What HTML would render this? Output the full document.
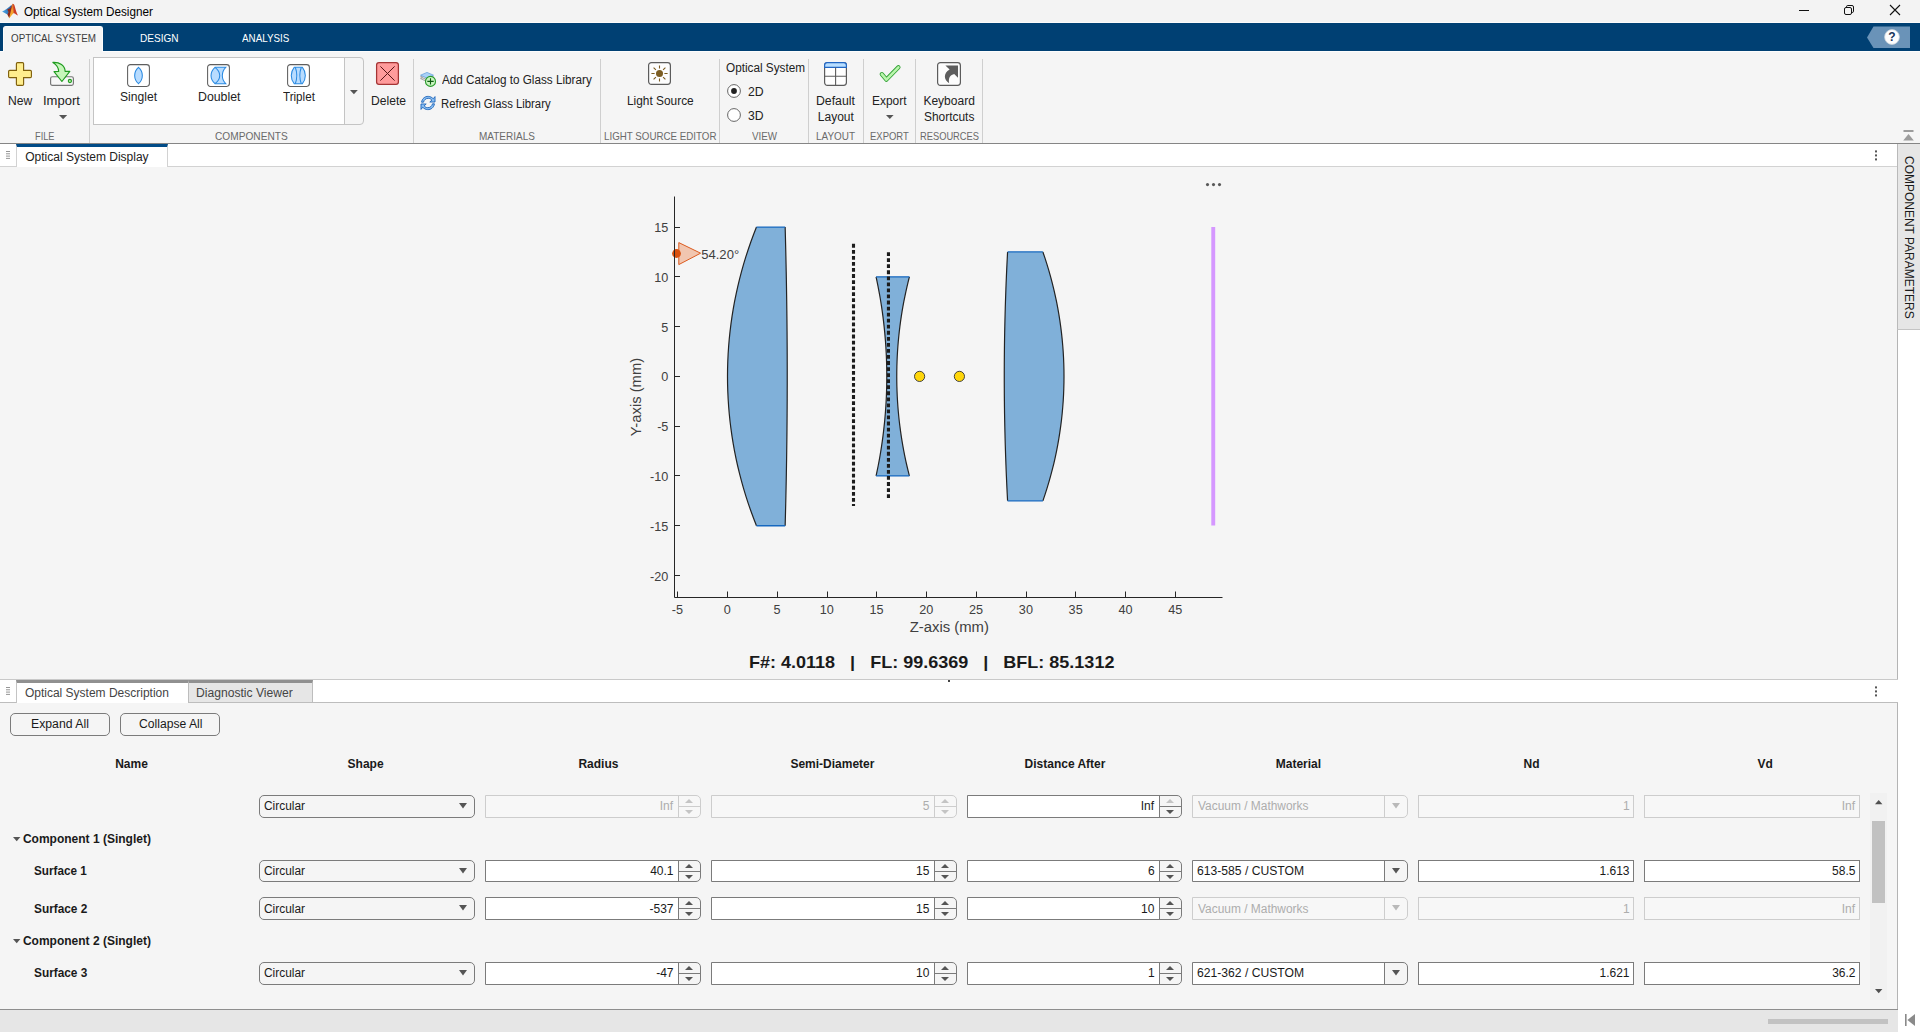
<!DOCTYPE html>
<html lang="en"><head><meta charset="utf-8"><title>Optical System Designer</title>
<style>
html,body{margin:0;padding:0;}
body{width:1920px;height:1032px;overflow:hidden;background:#f5f5f5;font-family:"Liberation Sans",sans-serif;position:relative;}
.t{position:absolute;white-space:pre;line-height:1;transform-origin:0 0;}
.b{position:absolute;box-sizing:border-box;}
svg{position:absolute;overflow:visible;}
.sep{position:absolute;top:59px;height:84px;width:1px;background:#cfcfcf;}
.dd{position:absolute;box-sizing:border-box;height:23px;border:1px solid #7b7b7b;border-radius:5px;background:#f5f5f5;}
.sp{position:absolute;box-sizing:border-box;height:23px;border:1px solid #7b7b7b;border-radius:0 5px 5px 0;background:#f5f5f5;}
.sp i{position:absolute;left:0;top:0;bottom:0;background:#fff;border-right:1px solid #7b7b7b;}
.sp b{position:absolute;right:0;top:10px;height:1px;background:#7b7b7b;width:22px;}
.sp.dis,.dd.dis,.ef.dis{border-color:#cdcdcd;background:#f7f7f7;}
.sp.dis i{background:#f7f7f7;border-color:#cdcdcd;}
.sp.dis b{background:#cdcdcd;}
.ef{position:absolute;box-sizing:border-box;height:23px;border:1px solid #7b7b7b;background:#fff;}
.md{position:absolute;box-sizing:border-box;height:23px;border:1px solid #7b7b7b;border-radius:0 5px 5px 0;background:#f5f5f5;}
.md i{position:absolute;left:0;top:0;bottom:0;background:#fff;border-right:1px solid #7b7b7b;}
.md.dis{border-color:#cdcdcd;background:#f7f7f7;}
.md.dis i{background:#f7f7f7;border-color:#cdcdcd;}
</style></head><body>

<div class="b" style="left:0;top:0;width:1920px;height:23px;background:#f3f3f3;border-bottom:1px solid #fbfbfb"></div>
<svg style="left:2px;top:3px" width="17" height="16" viewBox="0 0 17 16">
<defs><linearGradient id="lgb" x1="0" y1="0" x2="1" y2="0"><stop offset="0" stop-color="#49a6e6"/><stop offset="1" stop-color="#2a63a8"/></linearGradient>
<linearGradient id="lgo" x1="0" y1="0" x2="0" y2="1"><stop offset="0" stop-color="#d8601c"/><stop offset="0.45" stop-color="#f39a2e"/><stop offset="1" stop-color="#f7b52a"/></linearGradient></defs>
<path d="M0.1 8.6 C3.6 7 6.8 4.6 9.6 1.8 L8.8 7 L5.4 11.4 Z" fill="url(#lgb)"/>
<path d="M5.2 6.6 L8.4 5 C9.2 3.4 9.9 1.9 10.6 0.7 L10.2 8 L7.3 15.2 L5.3 11.4 L6.6 9 Z" fill="#8e2a1a"/>
<path d="M10.6 0.7 C11.2 0.5 11.6 1 11.9 1.8 L12.2 9.8 C10.8 10.4 9.6 12.6 7.4 15.3 L7.2 15 C8.5 10.4 9.2 5.4 10.6 0.7 Z" fill="url(#lgo)"/>
<path d="M11.3 0.9 C12.2 1 12.6 2.6 13 4.2 C13.8 7.4 14.8 10.4 16 12.4 C14.4 11.9 13.2 10.4 11.6 10.2 C11.4 7 11.3 4 11.3 0.9 Z" fill="#cc3b24"/>
</svg>
<span class="t" style="left:23.83px;top:5.80px;font-size:12px;color:#000;transform:scaleX(0.9756);">Optical System Designer</span>
<svg style="left:1790px;top:0" width="130" height="23" viewBox="0 0 130 23">
<path d="M9 10.5 H19" stroke="#111" stroke-width="1" fill="none"/>
<rect x="54.5" y="7.5" width="7" height="7" rx="1.5" fill="none" stroke="#111" stroke-width="1"/>
<path d="M56.5 7.5 V6.8 Q56.5 5.5 57.8 5.5 H62 Q63.5 5.5 63.5 7 V11.2 Q63.5 12.5 62.2 12.5 H61.5" fill="none" stroke="#111" stroke-width="1"/>
<path d="M100 5 L110 15 M110 5 L100 15" stroke="#111" stroke-width="1.1" fill="none"/>
</svg>
<div class="b" style="left:0;top:23px;width:1920px;height:28px;background:#004073"></div>
<div class="b" style="left:0;top:51px;width:1920px;height:1px;background:#fdfdfd"></div>
<div class="b" style="left:3px;top:26px;width:100px;height:26px;background:#f5f5f5;border:1px solid #fdfdfd;border-bottom:none;border-radius:3px 3px 0 0"></div>
<span class="t" style="left:10.91px;top:33.00px;font-size:11px;color:#3c3c3c;transform:scaleX(0.8941);">OPTICAL SYSTEM</span>
<span class="t" style="left:140.19px;top:33.00px;font-size:11px;color:#fff;transform:scaleX(0.9165);">DESIGN</span>
<span class="t" style="left:242.00px;top:33.00px;font-size:11px;color:#fff;transform:scaleX(0.8919);">ANALYSIS</span>
<svg style="left:1866px;top:26px" width="46" height="23" viewBox="0 0 46 23">
<path d="M1 11.5 L7.5 0.5 H44 V22 H7.5 Z" fill="#6a93b8"/>
<circle cx="26" cy="11" r="7.4" fill="#fdfdfd"/>
<circle cx="26" cy="11" r="7.4" fill="none" stroke="#c9d3dc" stroke-width="0.8"/>
<text x="26" y="15.2" font-family="Liberation Sans, sans-serif" font-weight="bold" font-size="12" text-anchor="middle" fill="#16335a">?</text>
</svg>
<div class="b" style="left:0;top:52px;width:1920px;height:92px;background:#f5f5f5;border-bottom:1px solid #858585"></div>
<div class="sep" style="left:89px"></div>
<div class="sep" style="left:413px"></div>
<div class="sep" style="left:600px"></div>
<div class="sep" style="left:719px"></div>
<div class="sep" style="left:808px"></div>
<div class="sep" style="left:863px"></div>
<div class="sep" style="left:915px"></div>
<div class="sep" style="left:982px"></div>
<svg style="left:8px;top:62px" width="24" height="24" viewBox="0 0 24 24">
<path d="M9.5 0.6 H14.5 Q15.6 0.6 15.6 1.7 V8.4 H22.3 Q23.4 8.4 23.4 9.5 V14.5 Q23.4 15.6 22.3 15.6 H15.6 V22.3 Q15.6 23.4 14.5 23.4 H9.5 Q8.4 23.4 8.4 22.3 V15.6 H1.7 Q0.6 15.6 0.6 14.5 V9.5 Q0.6 8.4 1.7 8.4 H8.4 V1.7 Q8.4 0.6 9.5 0.6 Z" fill="#ffee8e" stroke="#80600c" stroke-width="1.15"/>
</svg>
<span class="t" style="left:7.63px;top:95.00px;font-size:12px;color:#222;transform:scaleX(1.0104);">New</span>
<svg style="left:50px;top:62px" width="24" height="24" viewBox="0 0 24 24">
<rect x="0.6" y="14.7" width="22.8" height="8.7" rx="1.8" fill="#f7f7f7" stroke="#767676" stroke-width="1.15"/>
<path d="M2.9 0.4 C9.6 0 15 3.4 15.1 9.3 L19.8 9.3 L11.9 19.5 L4 9.6 L8.7 9.5 C8.6 5.4 6.6 2.6 2.9 0.4 Z" fill="#c6f6ba" stroke="#1f9b1f" stroke-width="1.15" stroke-linejoin="round"/>
<circle cx="19.9" cy="19" r="1.6" fill="#b4eea4" stroke="#1f9b1f" stroke-width="1.1"/>
</svg>
<span class="t" style="left:43.13px;top:95.00px;font-size:12px;color:#222;transform:scaleX(1.0858);">Import</span>
<svg style="left:59px;top:115px" width="9" height="5"><path d="M0 0 H8.2 L4.1 4.2 Z" fill="#555"/></svg>
<span class="t" style="left:34.86px;top:131.25px;font-size:11.5px;color:#6a6a6a;transform:scaleX(0.8040);">FILE</span>
<div class="b" style="left:93px;top:57px;width:271px;height:68px;background:#f5f5f5;border:1px solid #c4c4c4;border-radius:0 4px 4px 0"></div>
<div class="b" style="left:93px;top:57px;width:252px;height:68px;background:#fff;border:1px solid #c4c4c4"></div>
<svg style="left:350px;top:90px" width="8" height="4"><path d="M0 0 H7.8 L3.9 4.2 Z" fill="#555"/></svg>
<svg style="left:127px;top:64px" width="23" height="23" viewBox="0 0 23 23"><rect x="0.6" y="0.6" width="21.8" height="21.8" rx="2.8" fill="#fff" stroke="#5e5e5e" stroke-width="1.05"/><path d="M11.5 3.3 C6.4 7.6 6.4 15.4 11.5 19.7 C16.6 15.4 16.6 7.6 11.5 3.3 Z" fill="#b8dcff" stroke="#2a8ae2" stroke-width="1.05"/></svg>
<svg style="left:207px;top:64px" width="23" height="23" viewBox="0 0 23 23"><rect x="0.6" y="0.6" width="21.8" height="21.8" rx="2.8" fill="#fff" stroke="#5e5e5e" stroke-width="1.05"/><path d="M8 3.3 H18.7 C14.2 8 14.2 15 18.7 19.7 H8 C2.7 15 2.7 8 8 3.3 Z" fill="#b8dcff" stroke="#2a8ae2" stroke-width="1.05"/><path d="M8 3.3 C14.3 8 14.3 15 8 19.7" fill="none" stroke="#2a8ae2" stroke-width="1.05"/></svg>
<svg style="left:287px;top:64px" width="23" height="23" viewBox="0 0 23 23"><rect x="0.6" y="0.6" width="21.8" height="21.8" rx="2.8" fill="#fff" stroke="#5e5e5e" stroke-width="1.05"/><path d="M7.2 3.3 H15.4 C19.3 8 19.3 15 15.4 19.7 H7.2 C3.3 15 3.3 8 7.2 3.3 Z" fill="#b8dcff" stroke="#2a8ae2" stroke-width="1.05"/><path d="M8.3 3.3 C10 8 10 15 8.3 19.7 M14.3 3.3 C12.6 8 12.6 15 14.3 19.7" fill="none" stroke="#2a8ae2" stroke-width="1.05"/></svg>
<span class="t" style="left:120.09px;top:90.70px;font-size:12px;color:#222;transform:scaleX(1.0083);">Singlet</span>
<span class="t" style="left:197.61px;top:90.70px;font-size:12px;color:#222;transform:scaleX(1.0268);">Doublet</span>
<span class="t" style="left:282.97px;top:90.70px;font-size:12px;color:#222;transform:scaleX(0.9686);">Triplet</span>
<span class="t" style="left:215.09px;top:131.25px;font-size:11.5px;color:#6a6a6a;transform:scaleX(0.8819);">COMPONENTS</span>
<svg style="left:376px;top:62px" width="23" height="23" viewBox="0 0 23 23">
<rect x="0.6" y="0.6" width="21.8" height="21.8" rx="2.4" fill="#ff9b9b" stroke="#a43434" stroke-width="1.25"/>
<path d="M4.4 4.4 L18.6 18.6 M18.6 4.4 L4.4 18.6" stroke="#571616" stroke-width="1" fill="none"/>
</svg>
<span class="t" style="left:370.63px;top:95.00px;font-size:12px;color:#222;transform:scaleX(1.0085);">Delete</span>
<svg style="left:420px;top:72px" width="17" height="16" viewBox="0 0 17 16">
<path d="M0.5 6.6 L7 3.8 L13.5 6.6 L7 9.6 Z" fill="#e8e8e8" stroke="#8a8a8a" stroke-width="0.7"/>
<path d="M0.5 4.8 L7 2 L13.5 4.8 L7 7.8 Z" fill="#e8e8e8" stroke="#8a8a8a" stroke-width="0.7"/>
<path d="M0.5 3.2 L7 0.4 L13.5 3.2 L7 6.2 Z" fill="#a9d1f7" stroke="#5b9bd8" stroke-width="0.7"/>
<circle cx="10.5" cy="9.4" r="5" fill="#c9f5c0" stroke="#27992a" stroke-width="1.1"/>
<path d="M7.3 9.4 H13.7 M10.5 6.2 V12.6" stroke="#0d5c10" stroke-width="1.1"/>
</svg>
<span class="t" style="left:442.30px;top:73.80px;font-size:12px;color:#222;transform:scaleX(0.9761);">Add Catalog to Glass Library</span>
<svg style="left:420px;top:95px" width="16" height="16" viewBox="0 0 16 16">
<path d="M1.6 7.2 C2 3.6 5 1.2 8.4 1.4 C10.4 1.5 12 2.4 13.2 3.8 L15 1.6 V7 H9.8 L11.9 5.1 C10.9 3.9 9.6 3.3 8.2 3.3 C5.8 3.3 3.9 5 3.5 7.2 Z" fill="#8cc1f4" stroke="#1b62b8" stroke-width="0.9" stroke-linejoin="round"/>
<path d="M14.4 8.8 C14 12.4 11 14.8 7.6 14.6 C5.6 14.5 4 13.6 2.8 12.2 L1 14.4 V9 H6.2 L4.1 10.9 C5.1 12.1 6.4 12.7 7.8 12.7 C10.2 12.7 12.1 11 12.5 8.8 Z" fill="#8cc1f4" stroke="#1b62b8" stroke-width="0.9" stroke-linejoin="round"/>
</svg>
<span class="t" style="left:441.39px;top:97.60px;font-size:12px;color:#222;transform:scaleX(0.9446);">Refresh Glass Library</span>
<span class="t" style="left:479.00px;top:131.25px;font-size:11.5px;color:#6a6a6a;transform:scaleX(0.8680);">MATERIALS</span>
<svg style="left:648px;top:62px" width="23" height="23" viewBox="0 0 23 23">
<rect x="0.6" y="0.6" width="21.8" height="21.8" rx="2.8" fill="#fdfdfd" stroke="#5c5c5c" stroke-width="1.2"/>
<circle cx="11.5" cy="11.5" r="3.5" fill="#7c5d22"/>
<path d="M11.5 3.4 V6.6 M11.5 16.4 V19.6 M3.4 11.5 H6.6 M16.4 11.5 H19.6 M5.6 5.6 L7.9 7.9 M15.1 15.1 L17.4 17.4 M17.4 5.6 L15.1 7.9 M7.9 15.1 L5.6 17.4" stroke="#7c5d22" stroke-width="1.1" fill="none"/>
</svg>
<span class="t" style="left:626.85px;top:95.00px;font-size:12px;color:#222;transform:scaleX(0.9897);">Light Source</span>
<span class="t" style="left:603.92px;top:131.25px;font-size:11.5px;color:#6a6a6a;transform:scaleX(0.8490);">LIGHT SOURCE EDITOR</span>
<span class="t" style="left:726.13px;top:62.00px;font-size:12px;color:#222;transform:scaleX(0.9794);">Optical System</span>
<svg style="left:727px;top:84px" width="14" height="14" viewBox="0 0 14 14"><circle cx="7" cy="7" r="6.4" fill="#fff" stroke="#666" stroke-width="1"/><circle cx="7" cy="7" r="2.9" fill="#222"/></svg>
<svg style="left:727px;top:108px" width="14" height="14" viewBox="0 0 14 14"><circle cx="7" cy="7" r="6.4" fill="#fff" stroke="#666" stroke-width="1"/></svg>
<span class="t" style="left:747.79px;top:85.60px;font-size:12px;color:#222;transform:scaleX(1.0224);">2D</span>
<span class="t" style="left:747.91px;top:109.60px;font-size:12px;color:#222;transform:scaleX(1.0139);">3D</span>
<span class="t" style="left:751.50px;top:131.25px;font-size:11.5px;color:#6a6a6a;transform:scaleX(0.8525);">VIEW</span>
<svg style="left:824px;top:62px" width="23" height="24" viewBox="0 0 23 24">
<rect x="0.6" y="0.6" width="21.8" height="22.8" rx="2.8" fill="#fff" stroke="#5c5c5c" stroke-width="1.2"/>
<path d="M0.6 5.3 V3.2 Q0.6 0.6 3.2 0.6 H19.8 Q22.4 0.6 22.4 3.2 V5.3 Z" fill="#b8deff" stroke="#2267c4" stroke-width="1.2"/>
<path d="M0.6 14.3 H22.4 M11.6 5.6 V23.4" stroke="#5c5c5c" stroke-width="1.1" fill="none"/>
</svg>
<span class="t" style="left:816.22px;top:95.00px;font-size:12px;color:#222;transform:scaleX(1.0227);">Default</span>
<span class="t" style="left:817.84px;top:110.60px;font-size:12px;color:#222;">Layout</span>
<span class="t" style="left:816.21px;top:131.25px;font-size:11.5px;color:#6a6a6a;transform:scaleX(0.8628);">LAYOUT</span>
<svg style="left:878px;top:64px" width="24" height="19" viewBox="0 0 24 19">
<path d="M3.8 10.2 L8.4 15.6 L20.4 3.3" fill="none" stroke="#2fa032" stroke-width="4.3" stroke-linecap="round" stroke-linejoin="round"/><path d="M3.8 10.2 L8.4 15.6 L20.4 3.3" fill="none" stroke="#baf5ad" stroke-width="2.6" stroke-linecap="round" stroke-linejoin="round"/>
</svg>
<span class="t" style="left:871.65px;top:95.00px;font-size:12px;color:#222;transform:scaleX(0.9940);">Export</span>
<svg style="left:886px;top:115px" width="8" height="4"><path d="M0 0 H7.6 L3.8 4 Z" fill="#555"/></svg>
<span class="t" style="left:869.94px;top:131.25px;font-size:11.5px;color:#6a6a6a;transform:scaleX(0.8238);">EXPORT</span>
<svg style="left:937px;top:62px" width="24" height="24" viewBox="0 0 24 24">
<rect x="0.6" y="0.6" width="22.8" height="22.8" rx="2.8" fill="#fdfdfd" stroke="#5c5c5c" stroke-width="1.2"/>
<path d="M8.4 3.4 H21 V15.8 L17.2 12 C13.6 12.8 11 15.8 12.2 21.2 C6.8 18.4 6 11.4 12.6 7.6 Z" fill="#5e5e5e"/>
</svg>
<span class="t" style="left:923.44px;top:95.00px;font-size:12px;color:#222;">Keyboard</span>
<span class="t" style="left:924.00px;top:110.60px;font-size:12px;color:#222;transform:scaleX(0.9944);">Shortcuts</span>
<span class="t" style="left:919.56px;top:131.25px;font-size:11.5px;color:#6a6a6a;transform:scaleX(0.8094);">RESOURCES</span>
<svg style="left:1903px;top:130px" width="11" height="11"><rect x="0.5" y="0" width="10" height="2" fill="#9c9c9c"/><path d="M0.2 10.6 L5.5 4 L10.8 10.6 Z" fill="#9c9c9c"/></svg>
<div class="b" style="left:0;top:144px;width:1898px;height:23px;background:#fff;border-bottom:1px solid #d2d2d2"></div>
<div class="b" style="left:16px;top:144px;width:152px;height:23px;background:#fff;border-left:1px solid #d2d2d2;border-right:1px solid #d2d2d2;border-top:3px solid #004b87"></div>
<svg style="left:5.5px;top:151px" width="5" height="8"><path d="M0 0.5 H4 M0 2.8 H4 M0 5.1 H4 M0 7.4 H4" stroke="#8a8a8a" stroke-width="0.9"/></svg>
<span class="t" style="left:25.22px;top:150.70px;font-size:12px;color:#222;">Optical System Display</span>
<svg style="left:1874px;top:150px" width="4" height="11"><rect x="1" y="0.4" width="2" height="2" fill="#555"/><rect x="1" y="4.4" width="2" height="2" fill="#555"/><rect x="1" y="8.4" width="2" height="2" fill="#555"/></svg>
<div class="b" style="left:1897px;top:144px;width:23px;height:888px;background:#fff;border-left:1px solid #b4b4b4"></div>
<div class="b" style="left:1897px;top:144px;width:23px;height:186px;background:#e6e6e6;border-left:1px solid #b9b9b9;border-bottom:1px solid #c4c4c4"></div>
<span class="t" style="left:1904.6px;top:156.20px;font-size:12px;color:#1a1a1a;transform-origin:0 0;transform:rotate(90deg) translate(0,-10.00px) scaleX(0.9984);">COMPONENT PARAMETERS</span>
<svg style="left:0;top:0" width="1920" height="1032" viewBox="0 0 1920 1032" font-family="Liberation Sans, sans-serif">
<path d="M756.48 525.73 L753.56 518.27 L750.80 510.80 L748.22 503.33 L745.79 495.87 L743.53 488.40 L741.43 480.93 L739.48 473.47 L737.68 466.00 L736.04 458.53 L734.54 451.07 L733.20 443.60 L731.99 436.13 L730.94 428.67 L730.02 421.20 L729.25 413.73 L728.62 406.27 L728.13 398.80 L727.78 391.33 L727.57 383.87 L727.50 376.40 L727.57 368.93 L727.78 361.47 L728.13 354.00 L728.62 346.53 L729.25 339.07 L730.02 331.60 L730.94 324.13 L731.99 316.67 L733.20 309.20 L734.54 301.73 L736.04 294.27 L737.68 286.80 L739.48 279.33 L741.43 271.87 L743.53 264.40 L745.79 256.93 L748.22 249.47 L750.80 242.00 L753.56 234.53 L756.48 227.07 L785.15 227.07 L785.35 234.53 L785.54 242.00 L785.73 249.47 L785.90 256.93 L786.06 264.40 L786.21 271.87 L786.35 279.33 L786.48 286.80 L786.60 294.27 L786.71 301.73 L786.81 309.20 L786.90 316.67 L786.98 324.13 L787.05 331.60 L787.10 339.07 L787.15 346.53 L787.19 354.00 L787.21 361.47 L787.23 368.93 L787.23 376.40 L787.23 383.87 L787.21 391.33 L787.19 398.80 L787.15 406.27 L787.10 413.73 L787.05 421.20 L786.98 428.67 L786.90 436.13 L786.81 443.60 L786.71 451.07 L786.60 458.53 L786.48 466.00 L786.35 473.47 L786.21 480.93 L786.06 488.40 L785.90 495.87 L785.73 503.33 L785.54 510.80 L785.35 518.27 L785.15 525.73 Z" fill="#80b0d9" stroke="none"/>
<path d="M756.48 525.73 L753.56 518.27 L750.80 510.80 L748.22 503.33 L745.79 495.87 L743.53 488.40 L741.43 480.93 L739.48 473.47 L737.68 466.00 L736.04 458.53 L734.54 451.07 L733.20 443.60 L731.99 436.13 L730.94 428.67 L730.02 421.20 L729.25 413.73 L728.62 406.27 L728.13 398.80 L727.78 391.33 L727.57 383.87 L727.50 376.40 L727.57 368.93 L727.78 361.47 L728.13 354.00 L728.62 346.53 L729.25 339.07 L730.02 331.60 L730.94 324.13 L731.99 316.67 L733.20 309.20 L734.54 301.73 L736.04 294.27 L737.68 286.80 L739.48 279.33 L741.43 271.87 L743.53 264.40 L745.79 256.93 L748.22 249.47 L750.80 242.00 L753.56 234.53 L756.48 227.07" fill="none" stroke="#232323" stroke-width="1.2"/>
<path d="M785.15 227.07 L785.35 234.53 L785.54 242.00 L785.73 249.47 L785.90 256.93 L786.06 264.40 L786.21 271.87 L786.35 279.33 L786.48 286.80 L786.60 294.27 L786.71 301.73 L786.81 309.20 L786.90 316.67 L786.98 324.13 L787.05 331.60 L787.10 339.07 L787.15 346.53 L787.19 354.00 L787.21 361.47 L787.23 368.93 L787.23 376.40 L787.23 383.87 L787.21 391.33 L787.19 398.80 L787.15 406.27 L787.10 413.73 L787.05 421.20 L786.98 428.67 L786.90 436.13 L786.81 443.60 L786.71 451.07 L786.60 458.53 L786.48 466.00 L786.35 473.47 L786.21 480.93 L786.06 488.40 L785.90 495.87 L785.73 503.33 L785.54 510.80 L785.35 518.27 L785.15 525.73" fill="none" stroke="#232323" stroke-width="1.2"/>
<path d="M756.48 227.07 L785.15 227.07 M756.48 525.73 L785.15 525.73" stroke="#1668c0" stroke-width="1.3" fill="none"/>
<path d="M876.08 475.96 L877.13 470.98 L878.13 466.00 L879.07 461.02 L879.96 456.04 L880.79 451.07 L881.57 446.09 L882.29 441.11 L882.96 436.13 L883.57 431.16 L884.13 426.18 L884.64 421.20 L885.09 416.22 L885.49 411.24 L885.84 406.27 L886.13 401.29 L886.37 396.31 L886.55 391.33 L886.68 386.36 L886.76 381.38 L886.79 376.40 L886.76 371.42 L886.68 366.44 L886.55 361.47 L886.37 356.49 L886.13 351.51 L885.84 346.53 L885.49 341.56 L885.09 336.58 L884.64 331.60 L884.13 326.62 L883.57 321.64 L882.96 316.67 L882.29 311.69 L881.57 306.71 L880.79 301.73 L879.96 296.76 L879.07 291.78 L878.13 286.80 L877.13 281.82 L876.08 276.84 L909.39 276.84 L908.14 281.82 L906.96 286.80 L905.84 291.78 L904.79 296.76 L903.81 301.73 L902.89 306.71 L902.04 311.69 L901.25 316.67 L900.53 321.64 L899.87 326.62 L899.27 331.60 L898.74 336.58 L898.27 341.56 L897.87 346.53 L897.52 351.51 L897.24 356.49 L897.03 361.47 L896.87 366.44 L896.78 371.42 L896.75 376.40 L896.78 381.38 L896.87 386.36 L897.03 391.33 L897.24 396.31 L897.52 401.29 L897.87 406.27 L898.27 411.24 L898.74 416.22 L899.27 421.20 L899.87 426.18 L900.53 431.16 L901.25 436.13 L902.04 441.11 L902.89 446.09 L903.81 451.07 L904.79 456.04 L905.84 461.02 L906.96 466.00 L908.14 470.98 L909.39 475.96 Z" fill="#80b0d9" stroke="none"/>
<path d="M876.08 475.96 L877.13 470.98 L878.13 466.00 L879.07 461.02 L879.96 456.04 L880.79 451.07 L881.57 446.09 L882.29 441.11 L882.96 436.13 L883.57 431.16 L884.13 426.18 L884.64 421.20 L885.09 416.22 L885.49 411.24 L885.84 406.27 L886.13 401.29 L886.37 396.31 L886.55 391.33 L886.68 386.36 L886.76 381.38 L886.79 376.40 L886.76 371.42 L886.68 366.44 L886.55 361.47 L886.37 356.49 L886.13 351.51 L885.84 346.53 L885.49 341.56 L885.09 336.58 L884.64 331.60 L884.13 326.62 L883.57 321.64 L882.96 316.67 L882.29 311.69 L881.57 306.71 L880.79 301.73 L879.96 296.76 L879.07 291.78 L878.13 286.80 L877.13 281.82 L876.08 276.84" fill="none" stroke="#232323" stroke-width="1.2"/>
<path d="M909.39 276.84 L908.14 281.82 L906.96 286.80 L905.84 291.78 L904.79 296.76 L903.81 301.73 L902.89 306.71 L902.04 311.69 L901.25 316.67 L900.53 321.64 L899.87 326.62 L899.27 331.60 L898.74 336.58 L898.27 341.56 L897.87 346.53 L897.52 351.51 L897.24 356.49 L897.03 361.47 L896.87 366.44 L896.78 371.42 L896.75 376.40 L896.78 381.38 L896.87 386.36 L897.03 391.33 L897.24 396.31 L897.52 401.29 L897.87 406.27 L898.27 411.24 L898.74 416.22 L899.27 421.20 L899.87 426.18 L900.53 431.16 L901.25 436.13 L902.04 441.11 L902.89 446.09 L903.81 451.07 L904.79 456.04 L905.84 461.02 L906.96 466.00 L908.14 470.98 L909.39 475.96" fill="none" stroke="#232323" stroke-width="1.2"/>
<path d="M876.08 276.84 L909.39 276.84 M876.08 475.96 L909.39 475.96" stroke="#1668c0" stroke-width="1.3" fill="none"/>
<path d="M1007.58 500.84 L1007.26 494.62 L1006.95 488.40 L1006.66 482.18 L1006.39 475.96 L1006.13 469.73 L1005.89 463.51 L1005.67 457.29 L1005.46 451.07 L1005.27 444.84 L1005.10 438.62 L1004.94 432.40 L1004.80 426.18 L1004.67 419.96 L1004.56 413.73 L1004.47 407.51 L1004.40 401.29 L1004.34 395.07 L1004.30 388.84 L1004.27 382.62 L1004.27 376.40 L1004.27 370.18 L1004.30 363.96 L1004.34 357.73 L1004.40 351.51 L1004.47 345.29 L1004.56 339.07 L1004.67 332.84 L1004.80 326.62 L1004.94 320.40 L1005.10 314.18 L1005.27 307.96 L1005.46 301.73 L1005.67 295.51 L1005.89 289.29 L1006.13 283.07 L1006.39 276.84 L1006.66 270.62 L1006.95 264.40 L1007.26 258.18 L1007.58 251.95 L1042.89 251.95 L1045.00 258.18 L1046.99 264.40 L1048.87 270.62 L1050.63 276.84 L1052.27 283.07 L1053.81 289.29 L1055.23 295.51 L1056.54 301.73 L1057.74 307.96 L1058.83 314.18 L1059.82 320.40 L1060.70 326.62 L1061.48 332.84 L1062.15 339.07 L1062.71 345.29 L1063.18 351.51 L1063.54 357.73 L1063.79 363.96 L1063.95 370.18 L1064.00 376.40 L1063.95 382.62 L1063.79 388.84 L1063.54 395.07 L1063.18 401.29 L1062.71 407.51 L1062.15 413.73 L1061.48 419.96 L1060.70 426.18 L1059.82 432.40 L1058.83 438.62 L1057.74 444.84 L1056.54 451.07 L1055.23 457.29 L1053.81 463.51 L1052.27 469.73 L1050.63 475.96 L1048.87 482.18 L1046.99 488.40 L1045.00 494.62 L1042.89 500.84 Z" fill="#80b0d9" stroke="none"/>
<path d="M1007.58 500.84 L1007.26 494.62 L1006.95 488.40 L1006.66 482.18 L1006.39 475.96 L1006.13 469.73 L1005.89 463.51 L1005.67 457.29 L1005.46 451.07 L1005.27 444.84 L1005.10 438.62 L1004.94 432.40 L1004.80 426.18 L1004.67 419.96 L1004.56 413.73 L1004.47 407.51 L1004.40 401.29 L1004.34 395.07 L1004.30 388.84 L1004.27 382.62 L1004.27 376.40 L1004.27 370.18 L1004.30 363.96 L1004.34 357.73 L1004.40 351.51 L1004.47 345.29 L1004.56 339.07 L1004.67 332.84 L1004.80 326.62 L1004.94 320.40 L1005.10 314.18 L1005.27 307.96 L1005.46 301.73 L1005.67 295.51 L1005.89 289.29 L1006.13 283.07 L1006.39 276.84 L1006.66 270.62 L1006.95 264.40 L1007.26 258.18 L1007.58 251.95" fill="none" stroke="#232323" stroke-width="1.2"/>
<path d="M1042.89 251.95 L1045.00 258.18 L1046.99 264.40 L1048.87 270.62 L1050.63 276.84 L1052.27 283.07 L1053.81 289.29 L1055.23 295.51 L1056.54 301.73 L1057.74 307.96 L1058.83 314.18 L1059.82 320.40 L1060.70 326.62 L1061.48 332.84 L1062.15 339.07 L1062.71 345.29 L1063.18 351.51 L1063.54 357.73 L1063.79 363.96 L1063.95 370.18 L1064.00 376.40 L1063.95 382.62 L1063.79 388.84 L1063.54 395.07 L1063.18 401.29 L1062.71 407.51 L1062.15 413.73 L1061.48 419.96 L1060.70 426.18 L1059.82 432.40 L1058.83 438.62 L1057.74 444.84 L1056.54 451.07 L1055.23 457.29 L1053.81 463.51 L1052.27 469.73 L1050.63 475.96 L1048.87 482.18 L1046.99 488.40 L1045.00 494.62 L1042.89 500.84" fill="none" stroke="#232323" stroke-width="1.2"/>
<path d="M1007.58 251.95 L1042.89 251.95 M1007.58 500.84 L1042.89 500.84" stroke="#1668c0" stroke-width="1.3" fill="none"/>
<path d="M853.5 243.85 V506.1" stroke="#1c1c1c" stroke-width="3.1" stroke-dasharray="3.8 2.25" fill="none"/>
<path d="M888.45 252.2 V499.9" stroke="#1c1c1c" stroke-width="3.1" stroke-dasharray="3.8 2.25" fill="none"/>
<circle cx="919.6" cy="376.4" r="5.1" fill="#ffd60a" stroke="#333" stroke-width="0.9"/>
<circle cx="959.4" cy="376.4" r="5.1" fill="#ffd60a" stroke="#333" stroke-width="0.9"/>
<path d="M1213.25 226.9 V525.4" stroke="#d597ff" stroke-width="3.9" fill="none"/>
<path d="M678.8 242.6 L700.6 253.2 L678.8 264.6 Z" fill="#f1c6b0" stroke="#dc5a1e" stroke-width="1" stroke-linejoin="round"/>
<circle cx="676.5" cy="253.5" r="4.4" fill="#d9500e"/>
<path d="M674.5 196.5 V597.5 H1222.5" fill="none" stroke="#262626" stroke-width="1"/>
<path d="M674.5 575.50 H680" stroke="#262626" stroke-width="1"/>
<text transform="translate(668.40 580.51) scale(0.925 1)" font-size="13.7" text-anchor="end" fill="#404040">-20</text>
<path d="M674.5 525.50 H680" stroke="#262626" stroke-width="1"/>
<text transform="translate(668.40 530.73) scale(0.925 1)" font-size="13.7" text-anchor="end" fill="#404040">-15</text>
<path d="M674.5 475.50 H680" stroke="#262626" stroke-width="1"/>
<text transform="translate(668.40 480.96) scale(0.925 1)" font-size="13.7" text-anchor="end" fill="#404040">-10</text>
<path d="M674.5 426.50 H680" stroke="#262626" stroke-width="1"/>
<text transform="translate(668.40 431.18) scale(0.925 1)" font-size="13.7" text-anchor="end" fill="#404040">-5</text>
<path d="M674.5 376.50 H680" stroke="#262626" stroke-width="1"/>
<text transform="translate(668.40 381.40) scale(0.925 1)" font-size="13.7" text-anchor="end" fill="#404040">0</text>
<path d="M674.5 326.50 H680" stroke="#262626" stroke-width="1"/>
<text transform="translate(668.40 331.62) scale(0.925 1)" font-size="13.7" text-anchor="end" fill="#404040">5</text>
<path d="M674.5 276.50 H680" stroke="#262626" stroke-width="1"/>
<text transform="translate(668.40 281.84) scale(0.925 1)" font-size="13.7" text-anchor="end" fill="#404040">10</text>
<path d="M674.5 227.50 H680" stroke="#262626" stroke-width="1"/>
<text transform="translate(668.40 232.07) scale(0.925 1)" font-size="13.7" text-anchor="end" fill="#404040">15</text>
<path d="M677.50 597.5 V591.5" stroke="#262626" stroke-width="1"/>
<text transform="translate(677.42 613.90) scale(0.925 1)" font-size="13.7" text-anchor="middle" fill="#404040">-5</text>
<path d="M727.50 597.5 V591.5" stroke="#262626" stroke-width="1"/>
<text transform="translate(727.20 613.90) scale(0.925 1)" font-size="13.7" text-anchor="middle" fill="#404040">0</text>
<path d="M777.50 597.5 V591.5" stroke="#262626" stroke-width="1"/>
<text transform="translate(776.98 613.90) scale(0.925 1)" font-size="13.7" text-anchor="middle" fill="#404040">5</text>
<path d="M827.50 597.5 V591.5" stroke="#262626" stroke-width="1"/>
<text transform="translate(826.76 613.90) scale(0.925 1)" font-size="13.7" text-anchor="middle" fill="#404040">10</text>
<path d="M876.50 597.5 V591.5" stroke="#262626" stroke-width="1"/>
<text transform="translate(876.53 613.90) scale(0.925 1)" font-size="13.7" text-anchor="middle" fill="#404040">15</text>
<path d="M926.50 597.5 V591.5" stroke="#262626" stroke-width="1"/>
<text transform="translate(926.31 613.90) scale(0.925 1)" font-size="13.7" text-anchor="middle" fill="#404040">20</text>
<path d="M976.50 597.5 V591.5" stroke="#262626" stroke-width="1"/>
<text transform="translate(976.09 613.90) scale(0.925 1)" font-size="13.7" text-anchor="middle" fill="#404040">25</text>
<path d="M1026.50 597.5 V591.5" stroke="#262626" stroke-width="1"/>
<text transform="translate(1025.87 613.90) scale(0.925 1)" font-size="13.7" text-anchor="middle" fill="#404040">30</text>
<path d="M1075.50 597.5 V591.5" stroke="#262626" stroke-width="1"/>
<text transform="translate(1075.65 613.90) scale(0.925 1)" font-size="13.7" text-anchor="middle" fill="#404040">35</text>
<path d="M1125.50 597.5 V591.5" stroke="#262626" stroke-width="1"/>
<text transform="translate(1125.42 613.90) scale(0.925 1)" font-size="13.7" text-anchor="middle" fill="#404040">40</text>
<path d="M1175.50 597.5 V591.5" stroke="#262626" stroke-width="1"/>
<text transform="translate(1175.20 613.90) scale(0.925 1)" font-size="13.7" text-anchor="middle" fill="#404040">45</text>
<text transform="translate(701.20 258.90) scale(0.955 1)" font-size="13.7" text-anchor="start" fill="#404040">54.20°</text>
<text transform="translate(949.30 631.90) scale(0.985 1)" font-size="15.1" text-anchor="middle" fill="#404040">Z-axis (mm)</text>
<text transform="translate(641.30 397.00) rotate(-90) scale(0.98 1)" font-size="15.1" text-anchor="middle" fill="#404040">Y-axis (mm)</text>
<circle cx="1207.5" cy="184.6" r="1.55" fill="#585858"/>
<circle cx="1213.5" cy="184.6" r="1.55" fill="#585858"/>
<circle cx="1219.5" cy="184.6" r="1.55" fill="#585858"/>
</svg>
<span class="t" style="left:749.12px;top:654.40px;font-size:16.4px;color:#1a1a1a;transform:scaleX(1.0987);font-weight:bold;">F#: 4.0118   |   FL: 99.6369   |   BFL: 85.1312</span>
<div class="b" style="left:0;top:679px;width:1898px;height:24px;background:#fff;border-top:1px solid #c9c9c9;border-bottom:1px solid #bdbdbd"></div>
<div class="b" style="left:948px;top:680px;width:2px;height:1.5px;background:#444"></div>
<div class="b" style="left:16px;top:680px;width:172px;height:23px;background:#fff;border-left:1px solid #c4c4c4;border-top:3px solid #909090"></div>
<div class="b" style="left:188px;top:680px;width:125px;height:23px;background:#e6e6e6;border:1px solid #bdbdbd;border-top:3px solid #909090"></div>
<svg style="left:5.5px;top:687px" width="5" height="8"><path d="M0 0.5 H4 M0 2.8 H4 M0 5.1 H4 M0 7.4 H4" stroke="#8a8a8a" stroke-width="0.9"/></svg>
<span class="t" style="left:24.92px;top:687.00px;font-size:12px;color:#444;">Optical System Description</span>
<span class="t" style="left:196.23px;top:687.00px;font-size:12px;color:#444;transform:scaleX(1.0097);">Diagnostic Viewer</span>
<svg style="left:1874px;top:686px" width="4" height="11"><rect x="1" y="0.4" width="2" height="2" fill="#555"/><rect x="1" y="4.4" width="2" height="2" fill="#555"/><rect x="1" y="8.4" width="2" height="2" fill="#555"/></svg>
<div class="b" style="left:10px;top:713px;width:100px;height:23px;border:1px solid #7b7b7b;border-radius:5px;background:#f5f5f5"></div>
<div class="b" style="left:120px;top:713px;width:100px;height:23px;border:1px solid #7b7b7b;border-radius:5px;background:#f5f5f5"></div>
<span class="t" style="left:31.22px;top:717.60px;font-size:12px;color:#1a1a1a;transform:scaleX(1.0207);">Expand All</span>
<span class="t" style="left:138.99px;top:717.60px;font-size:12px;color:#1a1a1a;transform:scaleX(1.0127);">Collapse All</span>
<span class="t" style="left:115.20px;top:758.00px;font-size:12px;color:#1a1a1a;font-weight:bold;">Name</span>
<span class="t" style="left:347.56px;top:758.00px;font-size:12px;color:#1a1a1a;font-weight:bold;">Shape</span>
<span class="t" style="left:578.44px;top:758.00px;font-size:12px;color:#1a1a1a;font-weight:bold;">Radius</span>
<span class="t" style="left:790.38px;top:758.00px;font-size:12px;color:#1a1a1a;font-weight:bold;">Semi-Diameter</span>
<span class="t" style="left:1024.56px;top:758.00px;font-size:12px;color:#1a1a1a;font-weight:bold;">Distance After</span>
<span class="t" style="left:1275.78px;top:758.00px;font-size:12px;color:#1a1a1a;font-weight:bold;">Material</span>
<span class="t" style="left:1523.62px;top:758.00px;font-size:12px;color:#1a1a1a;font-weight:bold;">Nd</span>
<span class="t" style="left:1757.62px;top:758.00px;font-size:12px;color:#1a1a1a;font-weight:bold;">Vd</span>
<div class="dd" style="left:259px;top:795px;width:216px;height:23px;"></div>
<span class="t" style="left:264.21px;top:800.00px;font-size:12px;color:#1a1a1a;transform:scaleX(0.9911);">Circular</span>
<svg style="left:459px;top:803px" width="8" height="5.6"><path d="M0 0 H8 L4.0 5.6 Z" fill="#555"/></svg>
<div class="sp dis" style="left:485px;top:795px;width:216px;height:23px;"><i style="width:192px"></i><b></b></div>
<span class="t" style="left:659.68px;top:800.00px;font-size:12px;color:#adadad;">Inf</span>
<svg style="left:685px;top:799px" width="8" height="4.1"><path d="M0 4.1 H8 L4.0 0 Z" fill="#c4c4c4"/></svg>
<svg style="left:685px;top:810px" width="8" height="4.1"><path d="M0 0 H8 L4.0 4.1 Z" fill="#c4c4c4"/></svg>
<div class="sp dis" style="left:711px;top:795px;width:246px;height:23px;"><i style="width:222px"></i><b></b></div>
<span class="t" style="left:922.76px;top:800.00px;font-size:12px;color:#adadad;">5</span>
<svg style="left:941px;top:799px" width="8" height="4.1"><path d="M0 4.1 H8 L4.0 0 Z" fill="#c4c4c4"/></svg>
<svg style="left:941px;top:810px" width="8" height="4.1"><path d="M0 0 H8 L4.0 4.1 Z" fill="#c4c4c4"/></svg>
<div class="sp" style="left:967px;top:795px;width:215px;height:23px;"><i style="width:191px"></i><b></b></div>
<span class="t" style="left:1140.68px;top:800.00px;font-size:12px;color:#1a1a1a;">Inf</span>
<svg style="left:1166px;top:799px" width="8" height="4.1"><path d="M0 4.1 H8 L4.0 0 Z" fill="#c4c4c4"/></svg>
<svg style="left:1166px;top:810px" width="8" height="4.1"><path d="M0 0 H8 L4.0 4.1 Z" fill="#555"/></svg>
<div class="md dis" style="left:1192px;top:795px;width:216px;height:23px;"><i style="width:191px"></i></div>
<span class="t" style="left:1197.90px;top:800.00px;font-size:12px;color:#adadad;transform:scaleX(0.9940);">Vacuum / Mathworks</span>
<svg style="left:1391.8px;top:803px" width="8" height="5.6"><path d="M0 0 H8 L4.0 5.6 Z" fill="#b9b9b9"/></svg>
<div class="ef dis" style="left:1418px;top:795px;width:216px;height:23px;"></div>
<span class="t" style="left:1622.88px;top:800.00px;font-size:12px;color:#adadad;">1</span>
<div class="ef dis" style="left:1644px;top:795px;width:216px;height:23px;"></div>
<span class="t" style="left:1841.68px;top:800.00px;font-size:12px;color:#adadad;">Inf</span>
<div class="dd" style="left:259px;top:860px;width:216px;height:22px;"></div>
<span class="t" style="left:264.21px;top:865.00px;font-size:12px;color:#1a1a1a;transform:scaleX(0.9911);">Circular</span>
<svg style="left:459px;top:868px" width="8" height="5.6"><path d="M0 0 H8 L4.0 5.6 Z" fill="#555"/></svg>
<div class="sp" style="left:485px;top:860px;width:216px;height:22px;"><i style="width:192px"></i><b></b></div>
<span class="t" style="left:650.20px;top:865.00px;font-size:12px;color:#1a1a1a;">40.1</span>
<svg style="left:685px;top:864px" width="8" height="4.1"><path d="M0 4.1 H8 L4.0 0 Z" fill="#555"/></svg>
<svg style="left:685px;top:875px" width="8" height="4.1"><path d="M0 0 H8 L4.0 4.1 Z" fill="#555"/></svg>
<div class="sp" style="left:711px;top:860px;width:246px;height:22px;"><i style="width:222px"></i><b></b></div>
<span class="t" style="left:916.04px;top:865.00px;font-size:12px;color:#1a1a1a;">15</span>
<svg style="left:941px;top:864px" width="8" height="4.1"><path d="M0 4.1 H8 L4.0 0 Z" fill="#555"/></svg>
<svg style="left:941px;top:875px" width="8" height="4.1"><path d="M0 0 H8 L4.0 4.1 Z" fill="#555"/></svg>
<div class="sp" style="left:967px;top:860px;width:215px;height:22px;"><i style="width:191px"></i><b></b></div>
<span class="t" style="left:1147.88px;top:865.00px;font-size:12px;color:#1a1a1a;">6</span>
<svg style="left:1166px;top:864px" width="8" height="4.1"><path d="M0 4.1 H8 L4.0 0 Z" fill="#555"/></svg>
<svg style="left:1166px;top:875px" width="8" height="4.1"><path d="M0 0 H8 L4.0 4.1 Z" fill="#555"/></svg>
<div class="md" style="left:1192px;top:860px;width:216px;height:22px;"><i style="width:191px"></i></div>
<span class="t" style="left:1197.29px;top:865.00px;font-size:12px;color:#1a1a1a;transform:scaleX(1.0119);">613-585 / CUSTOM</span>
<svg style="left:1391.8px;top:868px" width="8" height="5.6"><path d="M0 0 H8 L4.0 5.6 Z" fill="#555"/></svg>
<div class="ef" style="left:1418px;top:860px;width:216px;height:22px;"></div>
<span class="t" style="left:1599.48px;top:865.00px;font-size:12px;color:#1a1a1a;">1.613</span>
<div class="ef" style="left:1644px;top:860px;width:216px;height:22px;"></div>
<span class="t" style="left:1832.08px;top:865.00px;font-size:12px;color:#1a1a1a;">58.5</span>
<div class="dd" style="left:259px;top:897px;width:216px;height:23px;"></div>
<span class="t" style="left:264.21px;top:903.00px;font-size:12px;color:#1a1a1a;transform:scaleX(0.9911);">Circular</span>
<svg style="left:459px;top:905px" width="8" height="5.6"><path d="M0 0 H8 L4.0 5.6 Z" fill="#555"/></svg>
<div class="sp" style="left:485px;top:897px;width:216px;height:23px;"><i style="width:192px"></i><b></b></div>
<span class="t" style="left:649.48px;top:903.00px;font-size:12px;color:#1a1a1a;">-537</span>
<svg style="left:685px;top:901px" width="8" height="4.1"><path d="M0 4.1 H8 L4.0 0 Z" fill="#555"/></svg>
<svg style="left:685px;top:912px" width="8" height="4.1"><path d="M0 0 H8 L4.0 4.1 Z" fill="#555"/></svg>
<div class="sp" style="left:711px;top:897px;width:246px;height:23px;"><i style="width:222px"></i><b></b></div>
<span class="t" style="left:916.04px;top:903.00px;font-size:12px;color:#1a1a1a;">15</span>
<svg style="left:941px;top:901px" width="8" height="4.1"><path d="M0 4.1 H8 L4.0 0 Z" fill="#555"/></svg>
<svg style="left:941px;top:912px" width="8" height="4.1"><path d="M0 0 H8 L4.0 4.1 Z" fill="#555"/></svg>
<div class="sp" style="left:967px;top:897px;width:215px;height:23px;"><i style="width:191px"></i><b></b></div>
<span class="t" style="left:1141.04px;top:903.00px;font-size:12px;color:#1a1a1a;">10</span>
<svg style="left:1166px;top:901px" width="8" height="4.1"><path d="M0 4.1 H8 L4.0 0 Z" fill="#555"/></svg>
<svg style="left:1166px;top:912px" width="8" height="4.1"><path d="M0 0 H8 L4.0 4.1 Z" fill="#555"/></svg>
<div class="md dis" style="left:1192px;top:897px;width:216px;height:23px;"><i style="width:191px"></i></div>
<span class="t" style="left:1197.90px;top:903.00px;font-size:12px;color:#adadad;transform:scaleX(0.9940);">Vacuum / Mathworks</span>
<svg style="left:1391.8px;top:905px" width="8" height="5.6"><path d="M0 0 H8 L4.0 5.6 Z" fill="#b9b9b9"/></svg>
<div class="ef dis" style="left:1418px;top:897px;width:216px;height:23px;"></div>
<span class="t" style="left:1622.88px;top:903.00px;font-size:12px;color:#adadad;">1</span>
<div class="ef dis" style="left:1644px;top:897px;width:216px;height:23px;"></div>
<span class="t" style="left:1841.68px;top:903.00px;font-size:12px;color:#adadad;">Inf</span>
<div class="dd" style="left:259px;top:962px;width:216px;height:23px;"></div>
<span class="t" style="left:264.21px;top:967.00px;font-size:12px;color:#1a1a1a;transform:scaleX(0.9911);">Circular</span>
<svg style="left:459px;top:970px" width="8" height="5.6"><path d="M0 0 H8 L4.0 5.6 Z" fill="#555"/></svg>
<div class="sp" style="left:485px;top:962px;width:216px;height:23px;"><i style="width:192px"></i><b></b></div>
<span class="t" style="left:656.20px;top:967.00px;font-size:12px;color:#1a1a1a;">-47</span>
<svg style="left:685px;top:966px" width="8" height="4.1"><path d="M0 4.1 H8 L4.0 0 Z" fill="#555"/></svg>
<svg style="left:685px;top:977px" width="8" height="4.1"><path d="M0 0 H8 L4.0 4.1 Z" fill="#555"/></svg>
<div class="sp" style="left:711px;top:962px;width:246px;height:23px;"><i style="width:222px"></i><b></b></div>
<span class="t" style="left:916.04px;top:967.00px;font-size:12px;color:#1a1a1a;">10</span>
<svg style="left:941px;top:966px" width="8" height="4.1"><path d="M0 4.1 H8 L4.0 0 Z" fill="#555"/></svg>
<svg style="left:941px;top:977px" width="8" height="4.1"><path d="M0 0 H8 L4.0 4.1 Z" fill="#555"/></svg>
<div class="sp" style="left:967px;top:962px;width:215px;height:23px;"><i style="width:191px"></i><b></b></div>
<span class="t" style="left:1147.88px;top:967.00px;font-size:12px;color:#1a1a1a;">1</span>
<svg style="left:1166px;top:966px" width="8" height="4.1"><path d="M0 4.1 H8 L4.0 0 Z" fill="#555"/></svg>
<svg style="left:1166px;top:977px" width="8" height="4.1"><path d="M0 0 H8 L4.0 4.1 Z" fill="#555"/></svg>
<div class="md" style="left:1192px;top:962px;width:216px;height:23px;"><i style="width:191px"></i></div>
<span class="t" style="left:1197.29px;top:967.00px;font-size:12px;color:#1a1a1a;transform:scaleX(1.0119);">621-362 / CUSTOM</span>
<svg style="left:1391.8px;top:970px" width="8" height="5.6"><path d="M0 0 H8 L4.0 5.6 Z" fill="#555"/></svg>
<div class="ef" style="left:1418px;top:962px;width:216px;height:23px;"></div>
<span class="t" style="left:1599.48px;top:967.00px;font-size:12px;color:#1a1a1a;">1.621</span>
<div class="ef" style="left:1644px;top:962px;width:216px;height:23px;"></div>
<span class="t" style="left:1832.20px;top:967.00px;font-size:12px;color:#1a1a1a;">36.2</span>
<svg style="left:13.4px;top:837.2px" width="7.4" height="4.2"><path d="M0 0 H7.4 L3.7 4.2 Z" fill="#555"/></svg>
<span class="t" style="left:22.92px;top:833.00px;font-size:12px;color:#1a1a1a;font-weight:bold;">Component 1 (Singlet)</span>
<span class="t" style="left:33.85px;top:864.70px;font-size:12px;color:#1a1a1a;transform:scaleX(0.9757);font-weight:bold;">Surface 1</span>
<span class="t" style="left:33.84px;top:902.80px;font-size:12px;color:#1a1a1a;transform:scaleX(0.9872);font-weight:bold;">Surface 2</span>
<svg style="left:13.4px;top:939.2px" width="7.4" height="4.2"><path d="M0 0 H7.4 L3.7 4.2 Z" fill="#555"/></svg>
<span class="t" style="left:22.92px;top:935.00px;font-size:12px;color:#1a1a1a;font-weight:bold;">Component 2 (Singlet)</span>
<span class="t" style="left:33.84px;top:966.70px;font-size:12px;color:#1a1a1a;transform:scaleX(0.9872);font-weight:bold;">Surface 3</span>
<div class="b" style="left:1870px;top:793px;width:17px;height:207px;background:#f1f1f1"></div>
<div class="b" style="left:1872px;top:821px;width:13px;height:82px;background:#c1c1c1"></div>
<svg style="left:1875px;top:800.2px" width="7.4" height="4.2"><path d="M0 4.2 H7.4 L3.7 0 Z" fill="#505050"/></svg>
<svg style="left:1875px;top:988.6px" width="7.4" height="4.2"><path d="M0 0 H7.4 L3.7 4.2 Z" fill="#505050"/></svg>
<div class="b" style="left:0;top:1009px;width:1898px;height:23px;background:#e6e6e6;border-top:1px solid #8e8e8e"></div>
<div class="b" style="left:1768px;top:1019px;width:120px;height:5px;background:#c2c2c2"></div>
<svg style="left:1904.6px;top:1014px" width="10" height="12"><rect x="0" y="0" width="1.6" height="12" fill="#8a8a8a"/><path d="M10 0 V12 L2.4 6 Z" fill="#8a8a8a"/></svg>
</body></html>
